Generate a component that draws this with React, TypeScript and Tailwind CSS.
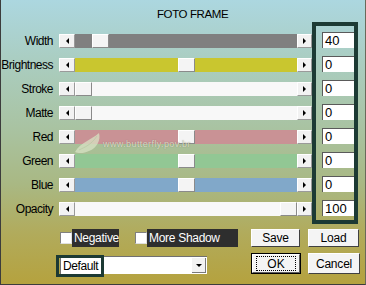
import React from "react";

type Row = { label: string; track: string; thumb: number; value: string };

const rows: Row[] = [
  { label: "Width", track: "bg-[#808080]", thumb: 17, value: "40" },
  { label: "Brightness", track: "bg-[#c9c62f]", thumb: 103, value: "0" },
  { label: "Stroke", track: "bg-[#f8f8f8]", thumb: 0, value: "0" },
  { label: "Matte", track: "bg-[#f8f8f8]", thumb: 0, value: "0" },
  { label: "Red", track: "bg-[#c99295]", thumb: 103, value: "0" },
  { label: "Green", track: "bg-[#92c794]", thumb: 103, value: "0" },
  { label: "Blue", track: "bg-[#81a8c9]", thumb: 103, value: "0" },
  { label: "Opacity", track: "bg-[#f8f8f8]", thumb: 205, value: "100" },
];

function ArrowBtn({ dir, w }: { dir: "left" | "right"; w: string }) {
  return (
    <div
      className={`${w} h-[14px] flex items-center justify-center bg-[#f2f2f2] border-t border-l border-white border-r border-b border-r-[#9a9a9a] border-b-[#9a9a9a]`}
    >
      {dir === "left" ? (
        <div className="w-0 h-0 border-y-[3px] border-y-transparent border-r-[3px] border-r-black" />
      ) : (
        <div className="w-0 h-0 border-y-[3px] border-y-transparent border-l-[3px] border-l-black" />
      )}
    </div>
  );
}

function Slider({ track, thumb }: { track: string; thumb: number }) {
  return (
    <div className="flex w-[253px] h-[14px]">
      <ArrowBtn dir="left" w="w-[16px]" />
      <div className={`relative w-[222px] h-[14px] ${track}`}>
        <div
          className="absolute top-0 w-[17px] h-[14px] bg-[#f4f4f4] border-t border-l border-white border-r border-b border-r-[#8a8a8a] border-b-[#8a8a8a]"
          style={{ left: thumb }}
        />
      </div>
      <ArrowBtn dir="right" w="w-[15px]" />
    </div>
  );
}

function Check({ label, w }: { label: string; w: string }) {
  return (
    <div className="flex items-center">
      <div className="w-[12px] h-[12px] bg-white border-t border-l border-[#808080] border-r border-b border-r-[#e0e0e0] border-b-[#e0e0e0]" />
      <div className={`${w} h-[18px] bg-[#2e2e2e] text-white text-[12px] leading-[18px] pl-[2px] tracking-[-0.3px]`}>
        {label}
      </div>
    </div>
  );
}

function Btn({ children, w }: { children: React.ReactNode; w: string }) {
  return (
    <div
      className={`${w} h-[18px] flex items-center justify-center bg-[#f4f4f4] border-t border-l border-white border-r border-b border-r-[#404040] border-b-[#404040] text-[12px] tracking-[-0.2px] text-black`}
    >
      {children}
    </div>
  );
}

export default function App() {
  return (
    <div className="relative w-[366px] h-[285px] overflow-hidden border-l border-b border-r border-l-[#3c3c3c] border-b-[#3c3c3c] border-r-[#6a6a5a] bg-[linear-gradient(to_bottom,#acd7e0_0%,#aacdc0_22%,#a9c3a2_45%,#a9b883_65%,#b1ab5c_82%,#b5a23e_100%)] font-['Liberation_Sans',Arial,sans-serif] text-black">
      {/* Title */}
      <div className="h-[22px] pt-[8px] pl-[156px] text-[11.5px] leading-[13px] tracking-[-0.4px]">FOTO FRAME</div>

      {/* Sliders + value column */}
      <div className="flex items-start">
        <div className="flex flex-col pt-[7px]">
          {rows.map((r) => (
            <div key={r.label} className="h-[24px] flex items-center">
              <div className="w-[52px] text-right text-[12px] leading-[14px] tracking-[-0.5px]">{r.label}</div>
              <div className="ml-[6px]">
                <Slider track={r.track} thumb={r.thumb} />
              </div>
            </div>
          ))}
        </div>
        <div className="w-[46px] border-4 border-[#1c3a34] pt-[2px] pl-[6px]">
          {rows.map((r) => (
            <div key={r.label} className="h-[24px] flex items-center">
              <div className="w-[32px] h-[16px] bg-white border-l border-t border-[#5a5a5a] pl-[2px] text-[13px] leading-[15px]">
                {r.value}
              </div>
            </div>
          ))}
        </div>
      </div>

      {/* Checkboxes + Save/Load */}
      <div className="flex items-center h-[19px] mt-[4px]">
        <div className="ml-[59px]">
          <Check label="Negative" w="w-[47px]" />
        </div>
        <div className="ml-[16px]">
          <Check label="More Shadow" w="w-[91px]" />
        </div>
        <div className="ml-[13px]">
          <Btn w="w-[49px]">Save</Btn>
        </div>
        <div className="ml-[8px]">
          <Btn w="w-[51px]">Load</Btn>
        </div>
      </div>

      {/* Preset select + OK/Cancel */}
      <div className="flex items-start mt-[6px]">
        <div className="relative ml-[59px] mt-[3px] w-[147px] h-[18px] bg-white border-t border-l border-[#707070] flex items-center">
          <div className="pl-[2px] text-[12px] leading-[16px] tracking-[-0.4px]">Default</div>
          <div className="ml-auto mr-[1px] w-[14px] h-[15px] flex items-center justify-center bg-[#f2f2f2] border-r border-b border-[#7a7a7a]">
            <div className="w-0 h-0 border-x-[3px] border-x-transparent border-t-[3px] border-t-black" />
          </div>
          <div className="absolute -left-[5px] -top-[2px] w-[48px] h-[22px] border-[3px] border-[#1c3a34]" />
        </div>
        <div className="ml-[44px] w-[50px] h-[21px] border border-black">
          <div className="w-full h-full flex items-center justify-center bg-[#f4f4f4] border-t border-l border-white border-r border-b border-r-[#606060] border-b-[#606060]">
            <div className="w-[40px] h-[15px] flex items-center justify-center border border-dotted border-black text-[12px]">OK</div>
          </div>
        </div>
        <div className="ml-[7px] w-[52px] h-[21px] flex items-center justify-center bg-[#f4f4f4] border-t border-l border-white border-r border-b border-r-[#404040] border-b-[#404040] text-[12px] tracking-[-0.2px]">
          Cancel
        </div>
      </div>

      {/* Watermark */}
      <div className="absolute left-[72px] top-[130px] flex items-center pointer-events-none">
        <svg width="32" height="26" viewBox="0 0 32 26">
          <path d="M2 22 C8 12 18 10 26 3 C28 10 24 18 16 21 C12 23 6 24 2 22 Z" fill="#d8e2c4" opacity="0.75" />
          <path d="M6 20 C12 17 18 15 24 6" stroke="#b8c8a4" strokeWidth="1" fill="none" opacity="0.7" />
        </svg>
        <div className="-ml-[2px] mt-[4px] text-[9px] tracking-[0.4px] text-[#eeeedd]/80 [text-shadow:0_0_1px_rgba(80,80,60,0.6)]">
          www.butterfly.pov.br
        </div>
      </div>
    </div>
  );
}
